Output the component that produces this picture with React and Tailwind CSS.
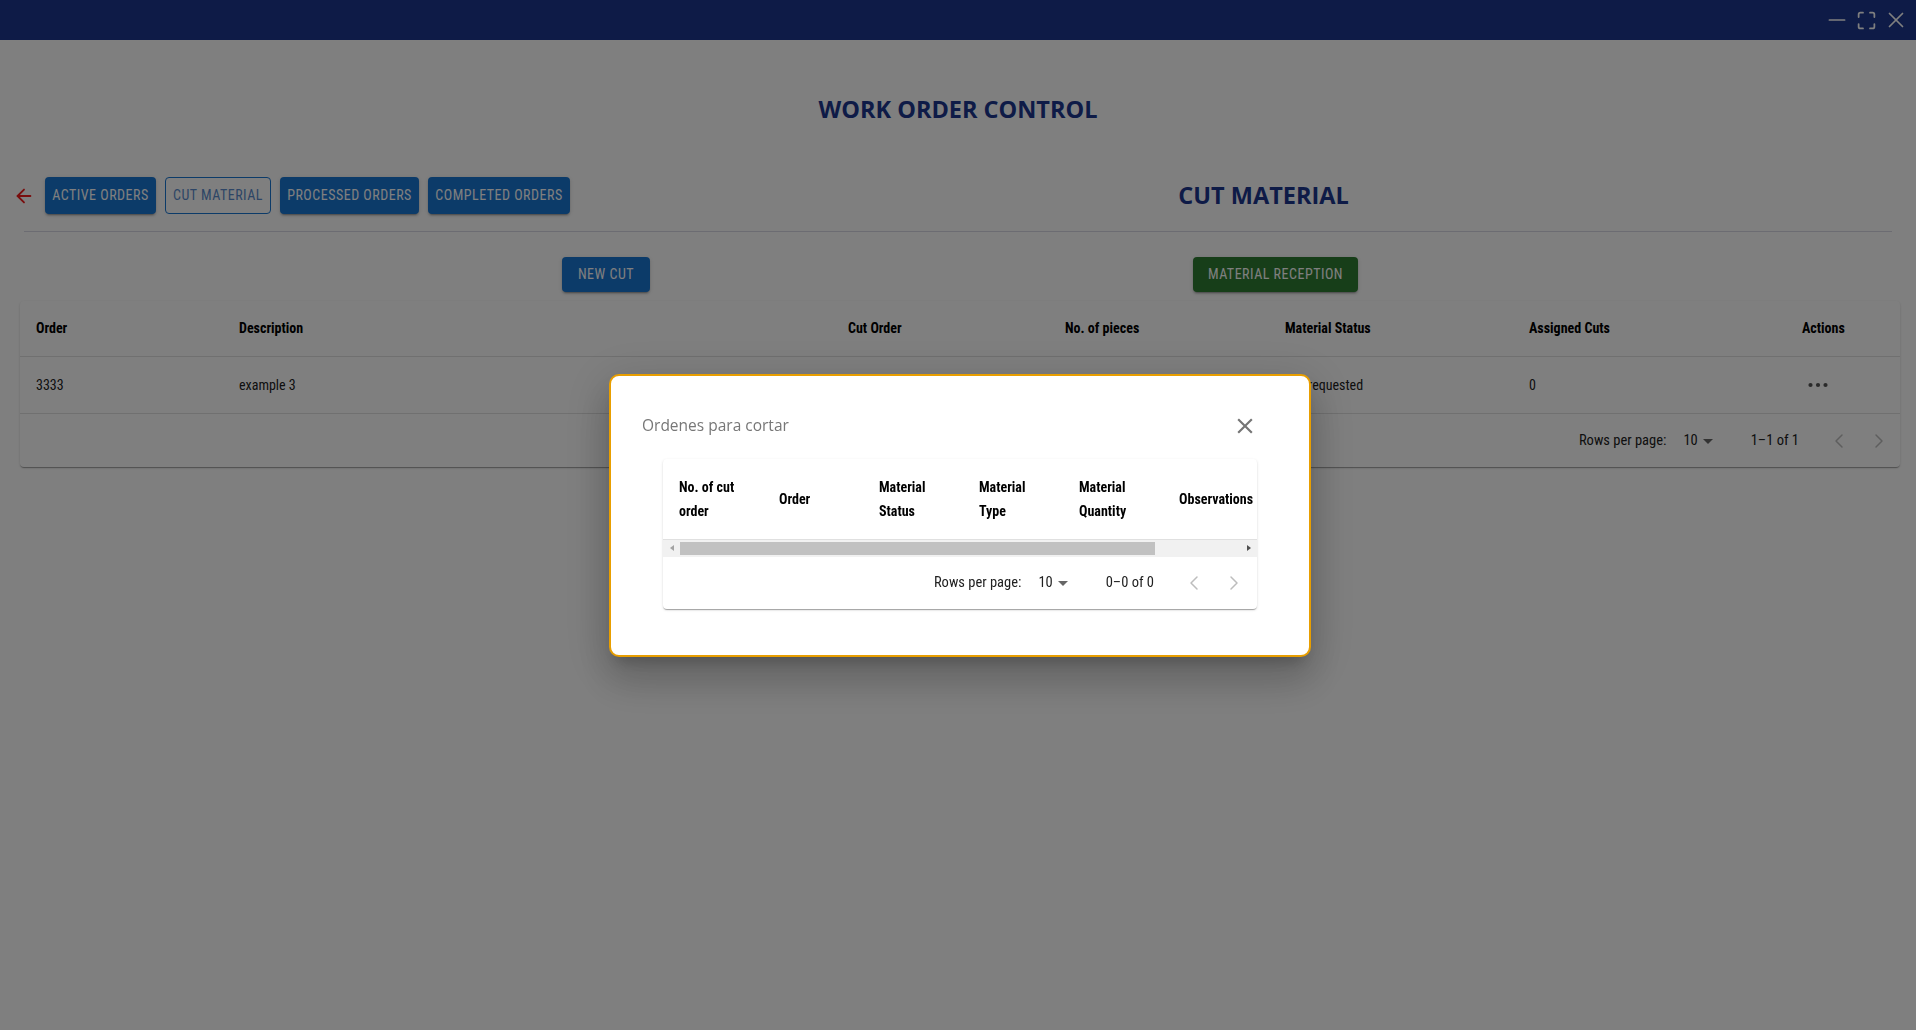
import { ArrowLeft, Minus, Maximize, X, ChevronLeft, ChevronRight } from 'lucide-react'

const COND = "font-['Roboto_Condensed','Liberation_Sans_Narrow',Roboto,sans-serif]"

const TABS = [
  { label: 'Active Orders',    w: 'w-[111px]', active: false },
  { label: 'Cut Material',     w: 'w-[106px]', active: true },
  { label: 'Processed Orders', w: 'w-[139px]', active: false },
  { label: 'Completed Orders', w: 'w-[142px]', active: false },
]

const MAIN_HEAD = ['Order', 'Description', 'Cut Order', 'No. of pieces', 'Material Status', 'Assigned Cuts', 'Actions']
const MAIN_ROW  = ['3333', 'example 3', '', '', 'Not requested', '0']

const CUT_HEAD = ['No. of cut order', 'Order', 'Material Status', 'Material Type', 'Material Quantity', 'Observations']

const RAISED = 'shadow-[0_3px_1px_-2px_rgba(0,0,0,0.2),0_2px_2px_0_rgba(0,0,0,0.14),0_1px_5px_0_rgba(0,0,0,0.12)]'
const PAPER = 'shadow-[0_2px_1px_-1px_rgba(0,0,0,0.2),0_1px_1px_0_rgba(0,0,0,0.14),0_1px_3px_0_rgba(0,0,0,0.12)]'

function DropTriangle({ className = '' }) {
  return (
    <svg width="24" height="24" viewBox="0 0 24 24" className={className}>
      <path d="M7 10l5 5 5-5z" fill="currentColor" />
    </svg>
  )
}

function Pagination({ range, pr }) {
  return (
    <div className={`flex h-full items-center justify-end text-[14.5px] text-[#212121] ${pr}`}>
      <span>Rows per page:</span>
      <span className="ml-[17px]">10</span>
      <DropTriangle className="-ml-[2px] text-[#666]" />
      <span className="ml-[31px]">{range}</span>
      <div className="ml-[20px] flex">
        <button className="flex h-10 w-10 items-center justify-center text-[#bdbdbd]">
          <ChevronLeft size={24} strokeWidth={1.5} />
        </button>
        <button className="flex h-10 w-10 items-center justify-center text-[#bdbdbd]">
          <ChevronRight size={24} strokeWidth={1.5} />
        </button>
      </div>
    </div>
  )
}

function TitleBar() {
  return (
    <div className="flex h-10 items-center justify-end gap-[6px] bg-[#1c368e] pr-[7px] text-white">
      <Minus size={26} strokeWidth={1.6} />
      <Maximize size={21} strokeWidth={2} />
      <X size={26} strokeWidth={1.6} />
    </div>
  )
}

export default function App() {
  return (
    <div className={`relative min-h-screen bg-white ${COND}`}>
      <TitleBar />

      <h1 className="mt-[54px] text-center font-['Open_Sans',sans-serif] text-[23.5px] leading-[30px] font-bold text-[#1c368e]">
        WORK ORDER CONTROL
      </h1>

      {/* tabs + section title */}
      <div className="mt-[53px] flex h-[37px] items-center pl-[13px]">
        <ArrowLeft size={22} strokeWidth={2} className="text-[#f21b1b]" />
        <div className="ml-[10px] flex gap-[9px]">
          {TABS.map(t => (
            <button
              key={t.label}
              className={`h-[37px] ${t.w} rounded text-[14px] font-normal uppercase tracking-[0.5px] ${
                t.active
                  ? 'border border-[#1976d2] text-[#5a8bcc]'
                  : `bg-[#1976d2] text-white ${RAISED}`
              }`}
            >
              {t.label}
            </button>
          ))}
        </div>
        <h2 className="flex-1 pl-[41px] text-center font-['Open_Sans',sans-serif] text-[23.5px] font-bold text-[#1c368e]">
          CUT MATERIAL
        </h2>
      </div>

      <div className="mx-6 mt-[17px] h-px bg-[#d8d8e4]" />

      {/* actions */}
      <div className="mt-[25px] flex h-[35px]">
        <button className={`ml-[562px] w-[88px] rounded bg-[#1976d2] text-[14px] font-normal uppercase tracking-[0.5px] text-white ${RAISED}`}>
          New Cut
        </button>
        <button className={`ml-[543px] w-[165px] rounded bg-[#2e7d32] text-[14px] font-normal uppercase tracking-[0.5px] text-white ${RAISED}`}>
          Material Reception
        </button>
      </div>

      {/* orders table */}
      <div className={`mt-[9px] ml-5 mr-4 rounded bg-white ${PAPER}`}>
        <div className="grid h-[56px] grid-cols-[203px_609px_217px_220px_244px_273px_1fr] items-center border-b border-[#e0e0e0] text-[14px] font-bold text-black">
          {MAIN_HEAD.map(h => (
            <div key={h} className="pl-4">{h}</div>
          ))}
        </div>
        <div className="grid h-[57px] grid-cols-[203px_609px_217px_220px_244px_273px_1fr] items-center border-b border-[#e0e0e0] text-[14px] text-[#212121]">
          {MAIN_ROW.map((c, i) => (
            <div key={i} className="pl-4">{c}</div>
          ))}
          <div className="pl-[22px] text-[#555]">
            <svg width="20" height="6" viewBox="0 0 20 6">
              <circle cx="2.5" cy="3" r="2.1" fill="currentColor" />
              <circle cx="10" cy="3" r="2.1" fill="currentColor" />
              <circle cx="17.5" cy="3" r="2.1" fill="currentColor" />
            </svg>
          </div>
        </div>
        <div className="h-[53px]">
          <Pagination range="1–1 of 1" pr="pr-px" />
        </div>
      </div>

      {/* modal */}
      <div className="fixed inset-0 flex items-center justify-center bg-black/50">
        <div className="ml-1 w-[702px] rounded-[10px] border-2 border-[#e89e00] bg-white pb-[46px] shadow-[0_11px_15px_-7px_rgba(0,0,0,0.2),0_24px_38px_3px_rgba(0,0,0,0.14),0_9px_46px_8px_rgba(0,0,0,0.12)]">
          <div className="mt-[30px] flex h-10 items-center justify-between pl-[31px] pr-[44px]">
            <span className="font-['Open_Sans',sans-serif] text-[15.5px] text-[#777]">Ordenes para cortar</span>
            <button className="flex h-10 w-10 items-center justify-center text-[#757575]">
              <svg width="26" height="26" viewBox="0 0 24 24">
                <path fill="currentColor" d="M19 6.41 17.59 5 12 10.59 6.41 5 5 6.41 10.59 12 5 17.59 6.41 19 12 13.41 17.59 19 19 17.59 13.41 12z" />
              </svg>
            </button>
          </div>

          <div className={`mx-[52px] mt-[13px] overflow-hidden rounded bg-white ${PAPER}`}>
            <div className="flex h-[81px] items-center overflow-hidden border-b border-[#e0e0e0] text-[14px] font-bold leading-6 text-black">
              {CUT_HEAD.map(h => (
                <div key={h} className="w-[100px] shrink-0 px-4">{h}</div>
              ))}
            </div>
            {/* horizontal scrollbar */}
            <div className="flex h-[17px] items-center bg-[#f1f1f1]">
              <div className="flex w-[17px] justify-center">
                <div className="h-0 w-0 border-y-[3.5px] border-r-[4px] border-y-transparent border-r-[#a3a3a3]" />
              </div>
              <div className="h-[13px] w-[475px] bg-[#c1c1c1]" />
              <div className="flex-1" />
              <div className="flex w-[17px] justify-center">
                <div className="h-0 w-0 border-y-[3.5px] border-l-[4px] border-y-transparent border-l-[#505050]" />
              </div>
            </div>
            <div className="h-[52px]">
              <Pagination range="0–0 of 0" pr="pr-[3px]" />
            </div>
          </div>
        </div>
      </div>
    </div>
  )
}
